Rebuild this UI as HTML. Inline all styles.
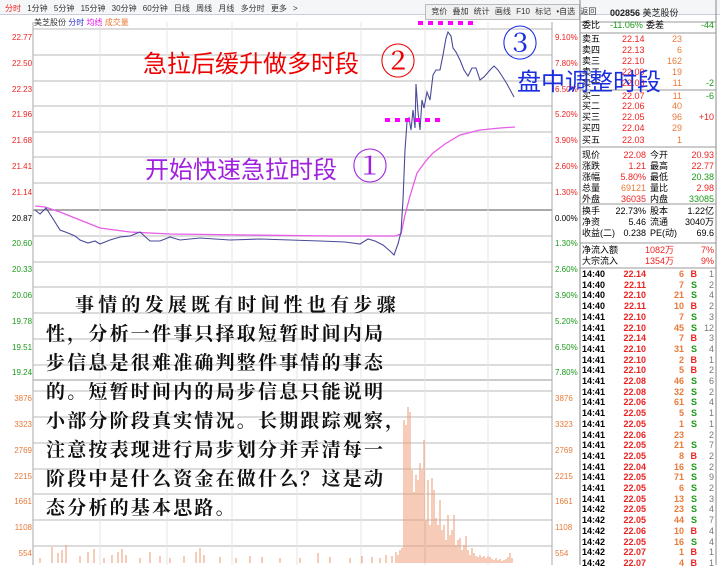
<!DOCTYPE html>
<html><head><meta charset="utf-8"><style>
*{margin:0;padding:0;box-sizing:border-box}
body{width:720px;height:565px;overflow:hidden;background:#fff;font-family:"Liberation Sans","Noto Sans CJK SC",sans-serif;position:relative}
.a{position:absolute;white-space:nowrap}
.s{font-size:8px}
.r{color:#e22}.g{color:#1a9a1a}.o{color:#e87a3a}.k{color:#000}.gy{color:#777}
.row{position:absolute;left:582px;width:132px;height:11px;font-size:9px;line-height:11px}
.row span{position:absolute}
.p{font-family:"Noto Serif CJK SC",serif;font-size:19px;font-weight:bold;color:#111;line-height:29px;position:absolute;left:46px;top:289px;white-space:nowrap;letter-spacing:2.2px}
</style></head><body>
<div class="a" style="left:0;top:0;width:720px;height:15px;background:#f4f6f8;border-bottom:1px solid #ccd"></div>
<div class="a s" style="left:5px;top:3px;color:#333;word-spacing:4px"><span class="r">分时</span> 1分钟 5分钟 15分钟 30分钟 60分钟 日线 周线 月线 多分时 更多 &gt;</div>
<div class="a s" style="left:425px;top:4px;height:16px;width:155px;background:#f0f0f0;border:1px solid #bbb;color:#333;line-height:14px;word-spacing:3px">&nbsp;竞价 叠加 统计 画线 F10 标记 •自选 返回</div>
<div class="a s" style="left:34px;top:17px;color:#333">美芝股份 <span style="color:#33c">分时</span> <span style="color:#e0e">均线</span> <span class="o">成交量</span></div>
<svg class="a" style="left:0;top:0" width="720" height="565">
<g stroke="#c8c8c8" stroke-width="1.3">
<line x1="33" y1="29" x2="552" y2="29"/><line x1="33" y1="55" x2="552" y2="55"/><line x1="33" y1="81" x2="552" y2="81"/><line x1="33" y1="106" x2="552" y2="106"/><line x1="33" y1="132" x2="552" y2="132"/><line x1="33" y1="157" x2="552" y2="157"/><line x1="33" y1="183" x2="552" y2="183"/><line x1="33" y1="236" x2="552" y2="236"/><line x1="33" y1="262" x2="552" y2="262"/><line x1="33" y1="287" x2="552" y2="287"/><line x1="33" y1="313" x2="552" y2="313"/><line x1="33" y1="339" x2="552" y2="339"/><line x1="33" y1="365" x2="552" y2="365"/><line x1="33" y1="391" x2="552" y2="391"/><line x1="33" y1="417" x2="552" y2="417"/><line x1="33" y1="443" x2="552" y2="443"/><line x1="33" y1="469" x2="552" y2="469"/><line x1="33" y1="494" x2="552" y2="494"/><line x1="33" y1="520" x2="552" y2="520"/><line x1="33" y1="546" x2="552" y2="546"/>
</g>
<line x1="33" y1="210" x2="552" y2="210" stroke="#777" stroke-width="1.3"/>
<line x1="33" y1="380" x2="552" y2="380" stroke="#999"/>
<g stroke="#e4e4e4"><line x1="100" y1="22" x2="100" y2="565"/><line x1="167" y1="22" x2="167" y2="565"/><line x1="232" y1="22" x2="232" y2="565"/><line x1="297" y1="22" x2="297" y2="565"/><line x1="361" y1="22" x2="361" y2="565"/><line x1="425" y1="22" x2="425" y2="565"/><line x1="488" y1="22" x2="488" y2="565"/></g>
<line x1="33" y1="22" x2="33" y2="565" stroke="#aaa"/><line x1="552" y1="22" x2="552" y2="565" stroke="#aaa"/><line x1="580" y1="0" x2="580" y2="565" stroke="#888"/><line x1="716" y1="0" x2="716" y2="565" stroke="#888"/>
<g stroke="#ee9a70" stroke-width="1">
<path d="M40 558V563M52 547V563M58 553V563M62 550V563M66 545V563M80 556V563M88 552V563M94 549V563M104 558V563M112 555V563M118 552V563M122 549V563M126 555V563M140 558V563M150 552V563M160 556V563M170 558V563M184 556V563M196 552V563M200 548V563M204 555V563M220 557V563M236 558V563M250 556V563M262 557V563M280 558V563M300 558V563M318 553V563M330 557V563M350 558V563M362 556V563M372 557V563M380 558V563M386 555V563M392 556V563M396 552V563M398 555V563M400 550V563M402 548V563M404 420V563M406 425V563M408 407V563M410 412V563M412 470V563M414 492V563M416 475V563M418 480V563M420 463V563M422 470V563M424 440V563M426 520V563M428 480V563M430 525V563M432 478V563M434 490V563M436 518V563M438 525V563M440 500V563M442 530V563M444 525V563M446 540V563M448 515V563M450 535V563M452 530V563M454 515V563M456 545V563M458 540V563M460 538V563M462 550V563M464 545V563M466 536V563M468 550V563M470 555V563M472 548V563M474 553V563M476 556V563M478 557V563M480 555V563M482 557V563M484 556V563M486 558V563M488 556V563M490 557V563M492 559V563M494 560V563M496 558V563M498 560V563M500 559V563M502 561V563M504 560V563M506 559V563M508 557V563M510 553V563M512 558V563"/>
</g>
<polyline fill="none" stroke="#e85ce8" stroke-width="1.3" points="35,206 45,207 60,212 80,220 100,228 130,232 170,234 250,235 330,236 395,236 401,234 405,215 410,196 417,173 425,162 433,153 445,144 460,135 480,130 500,128 515,127"/>
<polyline fill="none" stroke="#4a4a9a" stroke-width="1.1" points="35,210 40,214 46,208 55,222 60,230 68,233 75,236 80,240 88,243 95,241 100,244 110,240 120,237 130,236 140,232 150,241 160,241 170,237 180,240 200,238 230,240 260,239 290,240 320,241 345,242 360,244 368,239 375,241 383,245 390,251 394,255 398,244 401,232 403,200 405,150 407,122 409,118 411,130 413,110 415,128 416,84 418,112 420,130 422,100 424,108 427,92 430,100 433,75 436,70 440,70 443,55 446,38 448,32 451,36 453,48 456,52 460,60 464,70 468,76 472,68 476,68 480,80 484,77 490,70 494,66 498,70 502,76 507,84 514,97"/>
<g fill="#f0f">
<rect x="418" y="21" width="5" height="4"/><rect x="428" y="21" width="5" height="4"/><rect x="438" y="21" width="5" height="4"/><rect x="448" y="21" width="5" height="4"/><rect x="458" y="21" width="5" height="4"/><rect x="468" y="21" width="5" height="4"/>
<rect x="385" y="118" width="5" height="4"/><rect x="395" y="118" width="5" height="4"/><rect x="405" y="118" width="5" height="4"/><rect x="415" y="118" width="5" height="4"/><rect x="425" y="118" width="5" height="4"/><rect x="435" y="118" width="5" height="4"/>
</g>
<g stroke="#999"><line x1="580" y1="22" x2="716" y2="22"/><line x1="580" y1="33" x2="716" y2="33"/><line x1="580" y1="90" x2="716" y2="90"/><line x1="580" y1="147" x2="716" y2="147"/><line x1="580" y1="204" x2="716" y2="204"/><line x1="580" y1="243" x2="716" y2="243"/><line x1="580" y1="268" x2="716" y2="268"/></g>
</svg>
<div class="a s" style="left:12px;top:25px;line-height:25.8px;text-align:right;width:20px">
<div class="r">22.77</div><div class="r">22.50</div><div class="r">22.23</div><div class="r">21.96</div><div class="r">21.68</div><div class="r">21.41</div><div class="r">21.14</div><div class="k">20.87</div><div class="g">20.60</div><div class="g">20.33</div><div class="g">20.06</div><div class="g">19.78</div><div class="g">19.51</div><div class="g">19.24</div><div class="o">3876</div><div class="o">3323</div><div class="o">2769</div><div class="o">2215</div><div class="o">1661</div><div class="o">1108</div><div class="o">554</div></div>
<div class="a s" style="left:555px;top:25px;line-height:25.8px">
<div class="r">9.10%</div><div class="r">7.80%</div><div class="r">6.50%</div><div class="r">5.20%</div><div class="r">3.90%</div><div class="r">2.60%</div><div class="r">1.30%</div><div class="k">0.00%</div><div class="g">1.30%</div><div class="g">2.60%</div><div class="g">3.90%</div><div class="g">5.20%</div><div class="g">6.50%</div><div class="g">7.80%</div><div class="o">3876</div><div class="o">3323</div><div class="o">2769</div><div class="o">2215</div><div class="o">1661</div><div class="o">1108</div><div class="o">554</div></div>
<div class="a" style="left:610px;top:6px;font-size:9px;font-weight:bold;color:#222">002856 <span style="font-weight:normal">美芝股份</span></div>
<div id="rp"></div>
<div class="row" style="top:20px"><span>委比</span><span class="g" style="left:28px">-11.06%</span><span style="left:64px">委差</span><span class="g" style="right:0">-44</span></div>
<div class="row" style="top:34px"><span>卖五</span><span class="r" style="left:40px">22.14</span><span class="o" style="right:32px">23</span></div>
<div class="row" style="top:45px"><span>卖四</span><span class="r" style="left:40px">22.13</span><span class="o" style="right:32px">6</span></div>
<div class="row" style="top:56px"><span>卖三</span><span class="r" style="left:40px">22.10</span><span class="o" style="right:32px">162</span></div>
<div class="row" style="top:67px"><span>卖二</span><span class="r" style="left:40px">22.09</span><span class="o" style="right:32px">19</span></div>
<div class="row" style="top:78px"><span>卖一</span><span class="r" style="left:40px">22.08</span><span class="o" style="right:32px">11</span><span class="g" style="right:0">-2</span></div>
<div class="row" style="top:91px"><span>买一</span><span class="r" style="left:40px">22.07</span><span class="o" style="right:32px">11</span><span class="g" style="right:0">-6</span></div>
<div class="row" style="top:101px"><span>买二</span><span class="r" style="left:40px">22.06</span><span class="o" style="right:32px">40</span></div>
<div class="row" style="top:112px"><span>买三</span><span class="r" style="left:40px">22.05</span><span class="o" style="right:32px">96</span><span class="r" style="right:0">+10</span></div>
<div class="row" style="top:123px"><span>买四</span><span class="r" style="left:40px">22.04</span><span class="o" style="right:32px">29</span></div>
<div class="row" style="top:135px"><span>买五</span><span class="r" style="left:40px">22.03</span><span class="o" style="right:32px">1</span></div>
<div class="row" style="top:150px"><span>现价</span><span class="r" style="right:68px">22.08</span><span style="left:68px">今开</span><span class="r" style="right:0">20.93</span></div>
<div class="row" style="top:161px"><span>涨跌</span><span class="r" style="right:68px">1.21</span><span style="left:68px">最高</span><span class="r" style="right:0">22.77</span></div>
<div class="row" style="top:172px"><span>涨幅</span><span class="r" style="right:68px">5.80%</span><span style="left:68px">最低</span><span class="g" style="right:0">20.38</span></div>
<div class="row" style="top:183px"><span>总量</span><span class="o" style="right:68px">69121</span><span style="left:68px">量比</span><span class="r" style="right:0">2.98</span></div>
<div class="row" style="top:194px"><span>外盘</span><span class="r" style="right:68px">36035</span><span style="left:68px">内盘</span><span class="g" style="right:0">33085</span></div>
<div class="row" style="top:206px"><span>换手</span><span style="right:68px">22.73%</span><span style="left:68px">股本</span><span style="right:0">1.22亿</span></div>
<div class="row" style="top:217px"><span>净资</span><span style="right:68px">5.46</span><span style="left:68px">流通</span><span style="right:0">3040万</span></div>
<div class="row" style="top:228px"><span>收益(二)</span><span style="right:68px">0.238</span><span style="left:68px">PE(动)</span><span style="right:0">69.6</span></div>
<div class="row" style="top:245px"><span>净流入额</span><span class="r" style="right:40px">1082万</span><span class="r" style="right:0">7%</span></div>
<div class="row" style="top:256px"><span>大宗流入</span><span class="r" style="right:40px">1354万</span><span class="r" style="right:0">9%</span></div>
<script>
var d="14:40 22.14 6 B 1|14:40 22.11 7 S 2|14:40 22.10 21 S 4|14:40 22.11 10 B 2|14:41 22.10 7 S 3|14:41 22.10 45 S 12|14:41 22.14 7 B 3|14:41 22.10 31 S 4|14:41 22.10 2 B 1|14:41 22.10 5 B 2|14:41 22.08 46 S 6|14:41 22.08 32 S 2|14:41 22.06 61 S 4|14:41 22.05 5 S 1|14:41 22.05 1 S 1|14:41 22.06 23 _ 2|14:41 22.05 21 S 7|14:41 22.05 8 B 2|14:41 22.04 16 S 2|14:41 22.05 71 S 9|14:41 22.05 6 S 2|14:41 22.05 13 S 3|14:42 22.05 23 S 4|14:42 22.05 44 S 7|14:42 22.06 10 B 4|14:42 22.05 16 S 4|14:42 22.07 1 B 1|14:42 22.07 4 B 1".split("|");
var h="";d.forEach(function(l,i){var f=l.split(" ");h+='<div class="row" style="top:'+(269+i*10.7)+'px;font-weight:bold"><span>'+f[0]+'</span><span class="r" style="right:68px">'+f[1]+'</span><span class="o" style="right:30px">'+f[2]+'</span><span class="'+(f[3]=="B"?"r":"g")+'" style="right:17px">'+(f[3]=="_"?"":f[3])+'</span><span class="gy" style="right:0;font-weight:normal">'+f[4]+'</span></div>';});
document.getElementById("rp").innerHTML=h;
</script>
<div class="a" style="left:143px;top:44px;font-size:24px;color:#e00;font-family:'Noto Sans CJK SC',sans-serif">急拉后缓升做多时段</div>
<div class="a" style="left:380px;top:38px;font-size:36px;color:#e00;font-family:'Noto Serif CJK SC',serif;line-height:44px">②</div>
<div class="a" style="left:502px;top:20px;font-size:36px;color:#1a2ee0;font-family:'Noto Serif CJK SC',serif;line-height:44px">③</div>
<div class="a" style="left:517px;top:64px;font-size:24px;color:#1a2ee0;font-family:'Noto Sans CJK SC',sans-serif;line-height:32px">盘中调整时段</div>
<div class="a" style="left:145px;top:150px;font-size:24px;color:#a020e0;font-family:'Noto Sans CJK SC',sans-serif">开始快速急拉时段</div>
<div class="a" style="left:352px;top:143px;font-size:36px;color:#a020e0;font-family:'Noto Serif CJK SC',serif;line-height:44px">①</div>
<div class="p"><div style="padding-left:29px;letter-spacing:4.2px">事情的发展既有时间性也有步骤</div><div>性，分析一件事只择取短暂时间内局</div><div>步信息是很难准确判整件事情的事态</div><div>的。短暂时间内的局步信息只能说明</div><div>小部分阶段真实情况。长期跟踪观察，</div><div>注意按表现进行局步划分并弄清每一</div><div>阶段中是什么资金在做什么？这是动</div><div>态分析的基本思路。</div></div>
</body></html>
